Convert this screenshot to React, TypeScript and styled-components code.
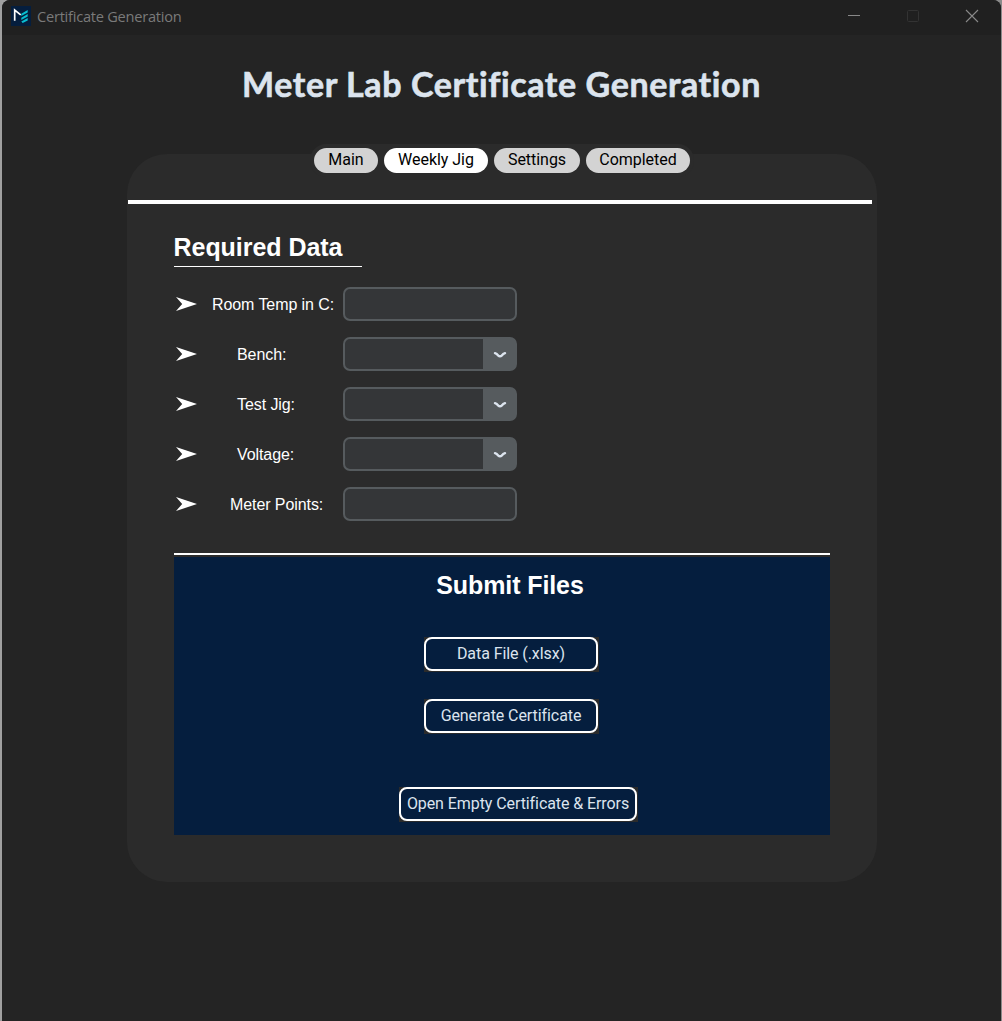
import React from 'react';
import styled, { createGlobalStyle } from 'styled-components';

const GlobalStyle = createGlobalStyle`
  *, *::before, *::after { box-sizing: border-box; }
  html, body { margin: 0; padding: 0; height: 100%; overflow: hidden; background: #999; }
  button { margin: 0; padding: 0; border: 0; background: none; font: inherit; color: inherit; }
`;

const Desktop = styled.div`
  height: 1021px;
  width: 1002px;
  padding: 0 1px 0 2px;
  background: linear-gradient(90deg, #a0a0a0 0 50%, #8a8a8a 50%);
`;

const Window = styled.div`
  height: 100%;
  display: flex;
  flex-direction: column;
  align-items: center;
  background: #242424;
  border-radius: 8px 8px 0 0;
  overflow: hidden;
`;

const TitleBar = styled.header`
  width: 100%;
  height: 35px;
  flex: none;
  display: flex;
  align-items: flex-start;
  padding: 6px 22px 0 9px;
  background: #202020;
`;

const WindowTitle = styled.span`
  margin: 0 auto 0 6px;
  font: 14.6px/20px 'Open Sans', 'Noto Sans', sans-serif;
  letter-spacing: -0.24px;
  color: #7a7a7a;
`;

const Controls = styled.div`
  display: flex;
  gap: 45px;
  padding-top: 3px;
`;

const Control = styled.button`
  display: block;
  width: 14px;
  height: 14px;
  svg { display: block; }
`;

const Heading = styled.h1`
  margin: 25px 0 0;
  height: 48px;
  font: 700 34px/48px Lato, sans-serif;
  letter-spacing: 0.6px;
  color: #dce4ee;
  -webkit-text-stroke: 0.6px #dce4ee;
  white-space: nowrap;
`;

const Card = styled.main`
  width: 750px;
  height: 728px;
  margin-top: 46px;
  border-radius: 40px;
  background: #2b2b2b;
  display: flex;
  flex-direction: column;
  align-items: stretch;
`;

const Tabs = styled.nav`
  align-self: center;
  display: flex;
  gap: 6px;
  height: 33px;
  margin-top: -10px;
  padding: 4px;
  border-radius: 16px;
  background: #2b2b2b;
`;

const Tab = styled.button<{ $active?: boolean; $width: number }>`
  width: ${p => p.$width}px;
  height: 25px;
  padding: 0 0 1px 1px;
  border-radius: 13px;
  background: ${p => (p.$active ? '#fff' : '#d3d3d3')};
  color: #000;
  font: 16px/24px Roboto, sans-serif;
  letter-spacing: -0.03px;
  white-space: nowrap;
`;

const Divider = styled.div`
  height: 4px;
  margin: 23px 5px 0 1px;
  background: #fff;
`;

const Content = styled.div`
  padding: 27px 47px 0;
`;

const SectionTitle = styled.h2`
  margin: 0;
  width: 188px;
  height: 36px;
  border-bottom: 1px solid #fff;
  font: 700 25px/33px 'Liberation Sans', Arial, sans-serif;
  letter-spacing: -0.04px;
  color: #fff;
  white-space: nowrap;
`;

const Form = styled.div`
  display: grid;
  grid-auto-rows: 34px;
  row-gap: 16px;
  margin-top: 20px;
`;

const Row = styled.label`
  display: grid;
  grid-template-columns: 24px 145px 174px;
  align-items: center;
`;

const LabelText = styled.span<{ $indent: number }>`
  padding: 2px 0 0 ${p => p.$indent + 0.5}px;
  font: 16px/20px 'Liberation Sans', Arial, sans-serif;
  letter-spacing: -0.08px;
  color: #fff;
  white-space: nowrap;
`;

const Field = styled.span`
  display: flex;
  justify-content: flex-end;
  height: 34px;
  border: 2px solid #565b5e;
  border-radius: 7px;
  background: #343638;
`;

const DropButton = styled.span`
  width: 32px;
  padding: 2px 0 0 3px;
  display: grid;
  place-items: center;
  background: #565b5e;
`;

const Submit = styled.section`
  margin-top: 32px;
  border-top: 2px solid #fff;
  padding-top: 2px;
`;

const SubmitPanel = styled.div`
  height: 278px;
  display: flex;
  flex-direction: column;
  align-items: center;
  background: #051e3e;
`;

const SubmitTitle = styled.h2`
  margin: 11px 0 35px;
  padding-left: 17px;
  font: 700 25px/34px 'Liberation Sans', Arial, sans-serif;
  letter-spacing: -0.1px;
  color: #fff;
`;

const ButtonSlot = styled.div<{ $top?: number; $width: number; $left: number }>`
  width: ${p => p.$width}px;
  height: 35px;
  margin: ${p => p.$top ?? 0}px 0 0 ${p => p.$left}px;
  padding: 0 1px 1px 0;
  flex: none;
  background: #2b2b2b;
`;

const ActionButton = styled.button`
  display: block;
  width: 100%;
  height: 34px;
  padding: 0 0 1px 1px;
  border: 2px solid #fff;
  border-radius: 8px;
  background: #051e3e;
  color: #dce4ee;
  font: 16px/29px Roboto, sans-serif;
  letter-spacing: -0.08px;
  white-space: nowrap;
`;

const AppLogo = () => (
  <svg width="20" height="20" viewBox="0 0 20 20">
    <rect width="20" height="20" fill="#051e3e" />
    <path d="M3.7 14.8V4l6 4.8" fill="none" stroke="#fff" strokeWidth="1.7" />
    <path d="M10.3 7.7 16.7 4v2.5l-6.4 3.6zm0 4L16.7 8v2.4L10.3 14zm0 3.9 6.4-3.7v2.5l-5 2.5z" fill="#08bdd0" />
  </svg>
);

const Arrow = () => (
  <svg width="24" height="16" viewBox="0 0 24 16">
    <path d="M2 1 23 8 2 15 8.2 8z" fill="#fff" />
  </svg>
);

const Chevron = () => (
  <svg width="14" height="8" viewBox="0 0 14 8">
    <path d="M2 2.2Q4 2.8 5 4.3Q7 6.1 9 4.3Q10 2.8 12 2.2" fill="none" stroke="#dce4ee" strokeWidth="2.4" strokeLinecap="round" strokeLinejoin="round" />
  </svg>
);

const tabs = [
  { label: 'Main', width: 64 },
  { label: 'Weekly Jig', width: 104, active: true },
  { label: 'Settings', width: 86 },
  { label: 'Completed', width: 104 },
];

const fields = [
  { label: 'Room Temp in C:', indent: 14 },
  { label: 'Bench:', indent: 39, select: true },
  { label: 'Test Jig:', indent: 39, select: true },
  { label: 'Voltage:', indent: 39, select: true },
  { label: 'Meter Points:', indent: 32 },
];

export default function App() {
  return (
    <Desktop>
      <GlobalStyle />
      <Window>
        <TitleBar>
          <AppLogo />
          <WindowTitle>Certificate Generation</WindowTitle>
          <Controls>
            <Control aria-label="Minimize">
              <svg width="14" height="14"><path d="M1 6.5h12" stroke="#888" /></svg>
            </Control>
            <Control aria-label="Maximize">
              <svg width="14" height="14"><rect x="1.5" y="1.5" width="11" height="11" rx="1" fill="none" stroke="#333" /></svg>
            </Control>
            <Control aria-label="Close">
              <svg width="14" height="14"><path d="m1 1 12 12M13 1 1 13" stroke="#888" strokeWidth="1.1" /></svg>
            </Control>
          </Controls>
        </TitleBar>
        <Heading>Meter Lab Certificate Generation</Heading>
        <Card>
          <Tabs>
            {tabs.map(t => (
              <Tab key={t.label} $width={t.width} $active={t.active}>{t.label}</Tab>
            ))}
          </Tabs>
          <Divider />
          <Content>
            <SectionTitle>Required Data</SectionTitle>
            <Form>
              {fields.map(f => (
                <Row key={f.label}>
                  <Arrow />
                  <LabelText $indent={f.indent}>{f.label}</LabelText>
                  <Field>{f.select && <DropButton><Chevron /></DropButton>}</Field>
                </Row>
              ))}
            </Form>
            <Submit>
              <SubmitPanel>
                <SubmitTitle>Submit Files</SubmitTitle>
                <ButtonSlot $width={175} $left={19}><ActionButton>Data File (.xlsx)</ActionButton></ButtonSlot>
                <ButtonSlot $width={175} $left={19} $top={27}><ActionButton>Generate Certificate</ActionButton></ButtonSlot>
                <ButtonSlot $width={239} $left={33} $top={53}><ActionButton>Open Empty Certificate &amp; Errors</ActionButton></ButtonSlot>
              </SubmitPanel>
            </Submit>
          </Content>
        </Card>
      </Window>
    </Desktop>
  );
}
